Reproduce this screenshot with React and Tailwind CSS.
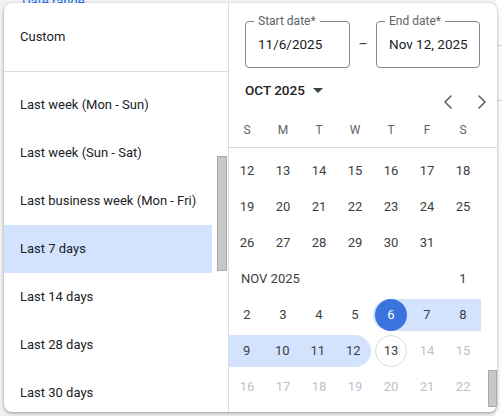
import React from 'react';
import { ChevronLeft, ChevronRight } from 'lucide-react';

const presets = [
  'Last week (Mon - Sun)',
  'Last week (Sun - Sat)',
  'Last business week (Mon - Fri)',
  'Last 7 days',
  'Last 14 days',
  'Last 28 days',
  'Last 30 days',
];

const weekdays = ['S', 'M', 'T', 'W', 'T', 'F', 'S'];

function Day({ n, muted }) {
  return (
    <div className={`h-9 w-9 flex items-center justify-center text-[13px] ${muted ? 'text-[#bdc1c6]' : 'text-[#3c4043]'}`}>
      {n}
    </div>
  );
}

function DateField({ label, value, width }) {
  return (
    <div className={`relative h-[47px] ${width} rounded-[4px] border border-[#80868b] flex items-center pl-3`}>
      <span className="absolute -top-[9px] left-[8px] bg-white px-1 text-[12px] leading-4 text-[#5f6368]">{label}</span>
      <span className="text-[13.5px] text-[#202124]">{value}</span>
    </div>
  );
}

export default function App() {
  return (
    <div className="relative w-[502px] h-[416px] overflow-hidden bg-[#f3f3f3]" style={{ fontFamily: 'Roboto, "Liberation Sans", sans-serif' }}>
      {/* page behind the popover */}
      <div className="absolute left-[22px] -top-[8px] text-[13px] text-[#1a73e8]">Date range</div>
      <div className="absolute right-0 top-0 h-full w-[6px] bg-white">
        <div className="mt-[45px] h-px bg-[#dadce0]" />
        <div className="mt-[54px] h-px bg-[#dadce0]" />
      </div>

      {/* popover */}
      <div className="absolute left-[4px] top-[3px] w-[493px] h-[409px] bg-white rounded-lg shadow-[0_1px_3px_rgba(0,0,0,0.3),0_2px_6px_rgba(0,0,0,0.12)] flex overflow-hidden">
        {/* presets */}
        <div className="relative w-[225px] shrink-0 border-r border-[#dadce0] flex flex-col">
          <div className="h-[69px] shrink-0 flex items-center pl-4 text-[13px] text-[#202124] border-b border-[#dadce0]">
            Custom
          </div>
          <div className="pt-[9px] flex flex-col">
            {presets.map((p) => (
              <div
                key={p}
                className={`h-12 shrink-0 w-[208px] flex items-center pl-4 text-[13px] text-[#202124] ${p === 'Last 7 days' ? 'bg-[#d3e3fd]' : ''}`}
              >
                {p}
              </div>
            ))}
          </div>
          <div className="absolute left-[213px] top-[153px] w-[10px] h-[115px] bg-[#c8c8c8] border border-[#a8a8a8]" />
        </div>

        {/* calendar */}
        <div className="relative flex-1 flex flex-col">
          <div className="flex items-center pl-4 pt-[18px]">
            <DateField label="Start date*" value="11/6/2025" width="w-[105px]" />
            <span className="w-[26px] text-center text-[#3c4043] text-[14px]">–</span>
            <DateField label="End date*" value="Nov 12, 2025" width="w-[104px]" />
          </div>

          <div className="flex items-center pl-4 mt-[11px] h-[22px] text-[13.5px] font-medium text-[#202124]">
            OCT 2025
            <svg width="10" height="5" viewBox="0 0 10 5" className="ml-[8px]">
              <path d="M0 0h10L5 5z" fill="#3c4043" />
            </svg>
          </div>

          <div className="flex justify-end items-center gap-[10px] pr-[3px] h-6 -mt-[11px] text-[#5f6368]">
            <ChevronLeft size={24} strokeWidth={1.6} />
            <ChevronRight size={24} strokeWidth={1.6} />
          </div>

          <div className="grid grid-cols-[repeat(7,36px)] mt-[6px] h-[20px] items-center text-[12px] text-[#5f6368]">
            {weekdays.map((d, i) => (
              <div key={i} className="text-center">{d}</div>
            ))}
          </div>
          <div className="mt-[7px] h-px bg-[#dadce0]" />

          <div className="pt-[5px] flex flex-col">
            <div className="grid grid-cols-[repeat(7,36px)]">
              {[12, 13, 14, 15, 16, 17, 18, 19, 20, 21, 22, 23, 24, 25, 26, 27, 28, 29, 30, 31].map((n) => (
                <Day key={n} n={n} />
              ))}
            </div>
            <div className="w-[252px] h-9 flex items-center justify-between text-[13px] text-[#3c4043]">
              <span className="pl-3">NOV 2025</span>
              <span className="w-9 text-center">1</span>
            </div>
            <div className="grid grid-cols-[repeat(7,36px)] h-9 items-center">
              <Day n={2} />
              <Day n={3} />
              <Day n={4} />
              <Day n={5} />
              <div className="col-span-3 h-8 flex items-center bg-[#d3e3fd] rounded-l-full">
                <div className="h-8 w-8 mx-[2px] rounded-full bg-[#3b73dc] text-white text-[13px] flex items-center justify-center">6</div>
                <div className="w-9 text-center text-[13px] text-[#3c4043]">7</div>
                <div className="w-9 text-center text-[13px] text-[#3c4043]">8</div>
              </div>
            </div>
            <div className="grid grid-cols-[repeat(7,36px)] h-9 items-center">
              <div className="col-span-4 h-8 flex items-center bg-[#d3e3fd] rounded-r-full w-[142px]">
                {[9, 10, 11, 12].map((n) => (
                  <div key={n} className="w-9 text-center text-[13px] text-[#3c4043]">{n}</div>
                ))}
              </div>
              <div className="flex justify-center">
                <div className="h-8 w-8 rounded-full border border-[#dadce0] text-[13px] text-[#3c4043] flex items-center justify-center">13</div>
              </div>
              <Day n={14} muted />
              <Day n={15} muted />
            </div>
            <div className="grid grid-cols-[repeat(7,36px)]">
              {[16, 17, 18, 19, 20, 21, 22].map((n) => (
                <Day key={n} n={n} muted />
              ))}
            </div>
          </div>
          <div className="absolute right-0 top-[367px] w-[9px] h-[37px] bg-[#c8c8c8] border border-[#a8a8a8]" />
        </div>
      </div>
    </div>
  );
}
